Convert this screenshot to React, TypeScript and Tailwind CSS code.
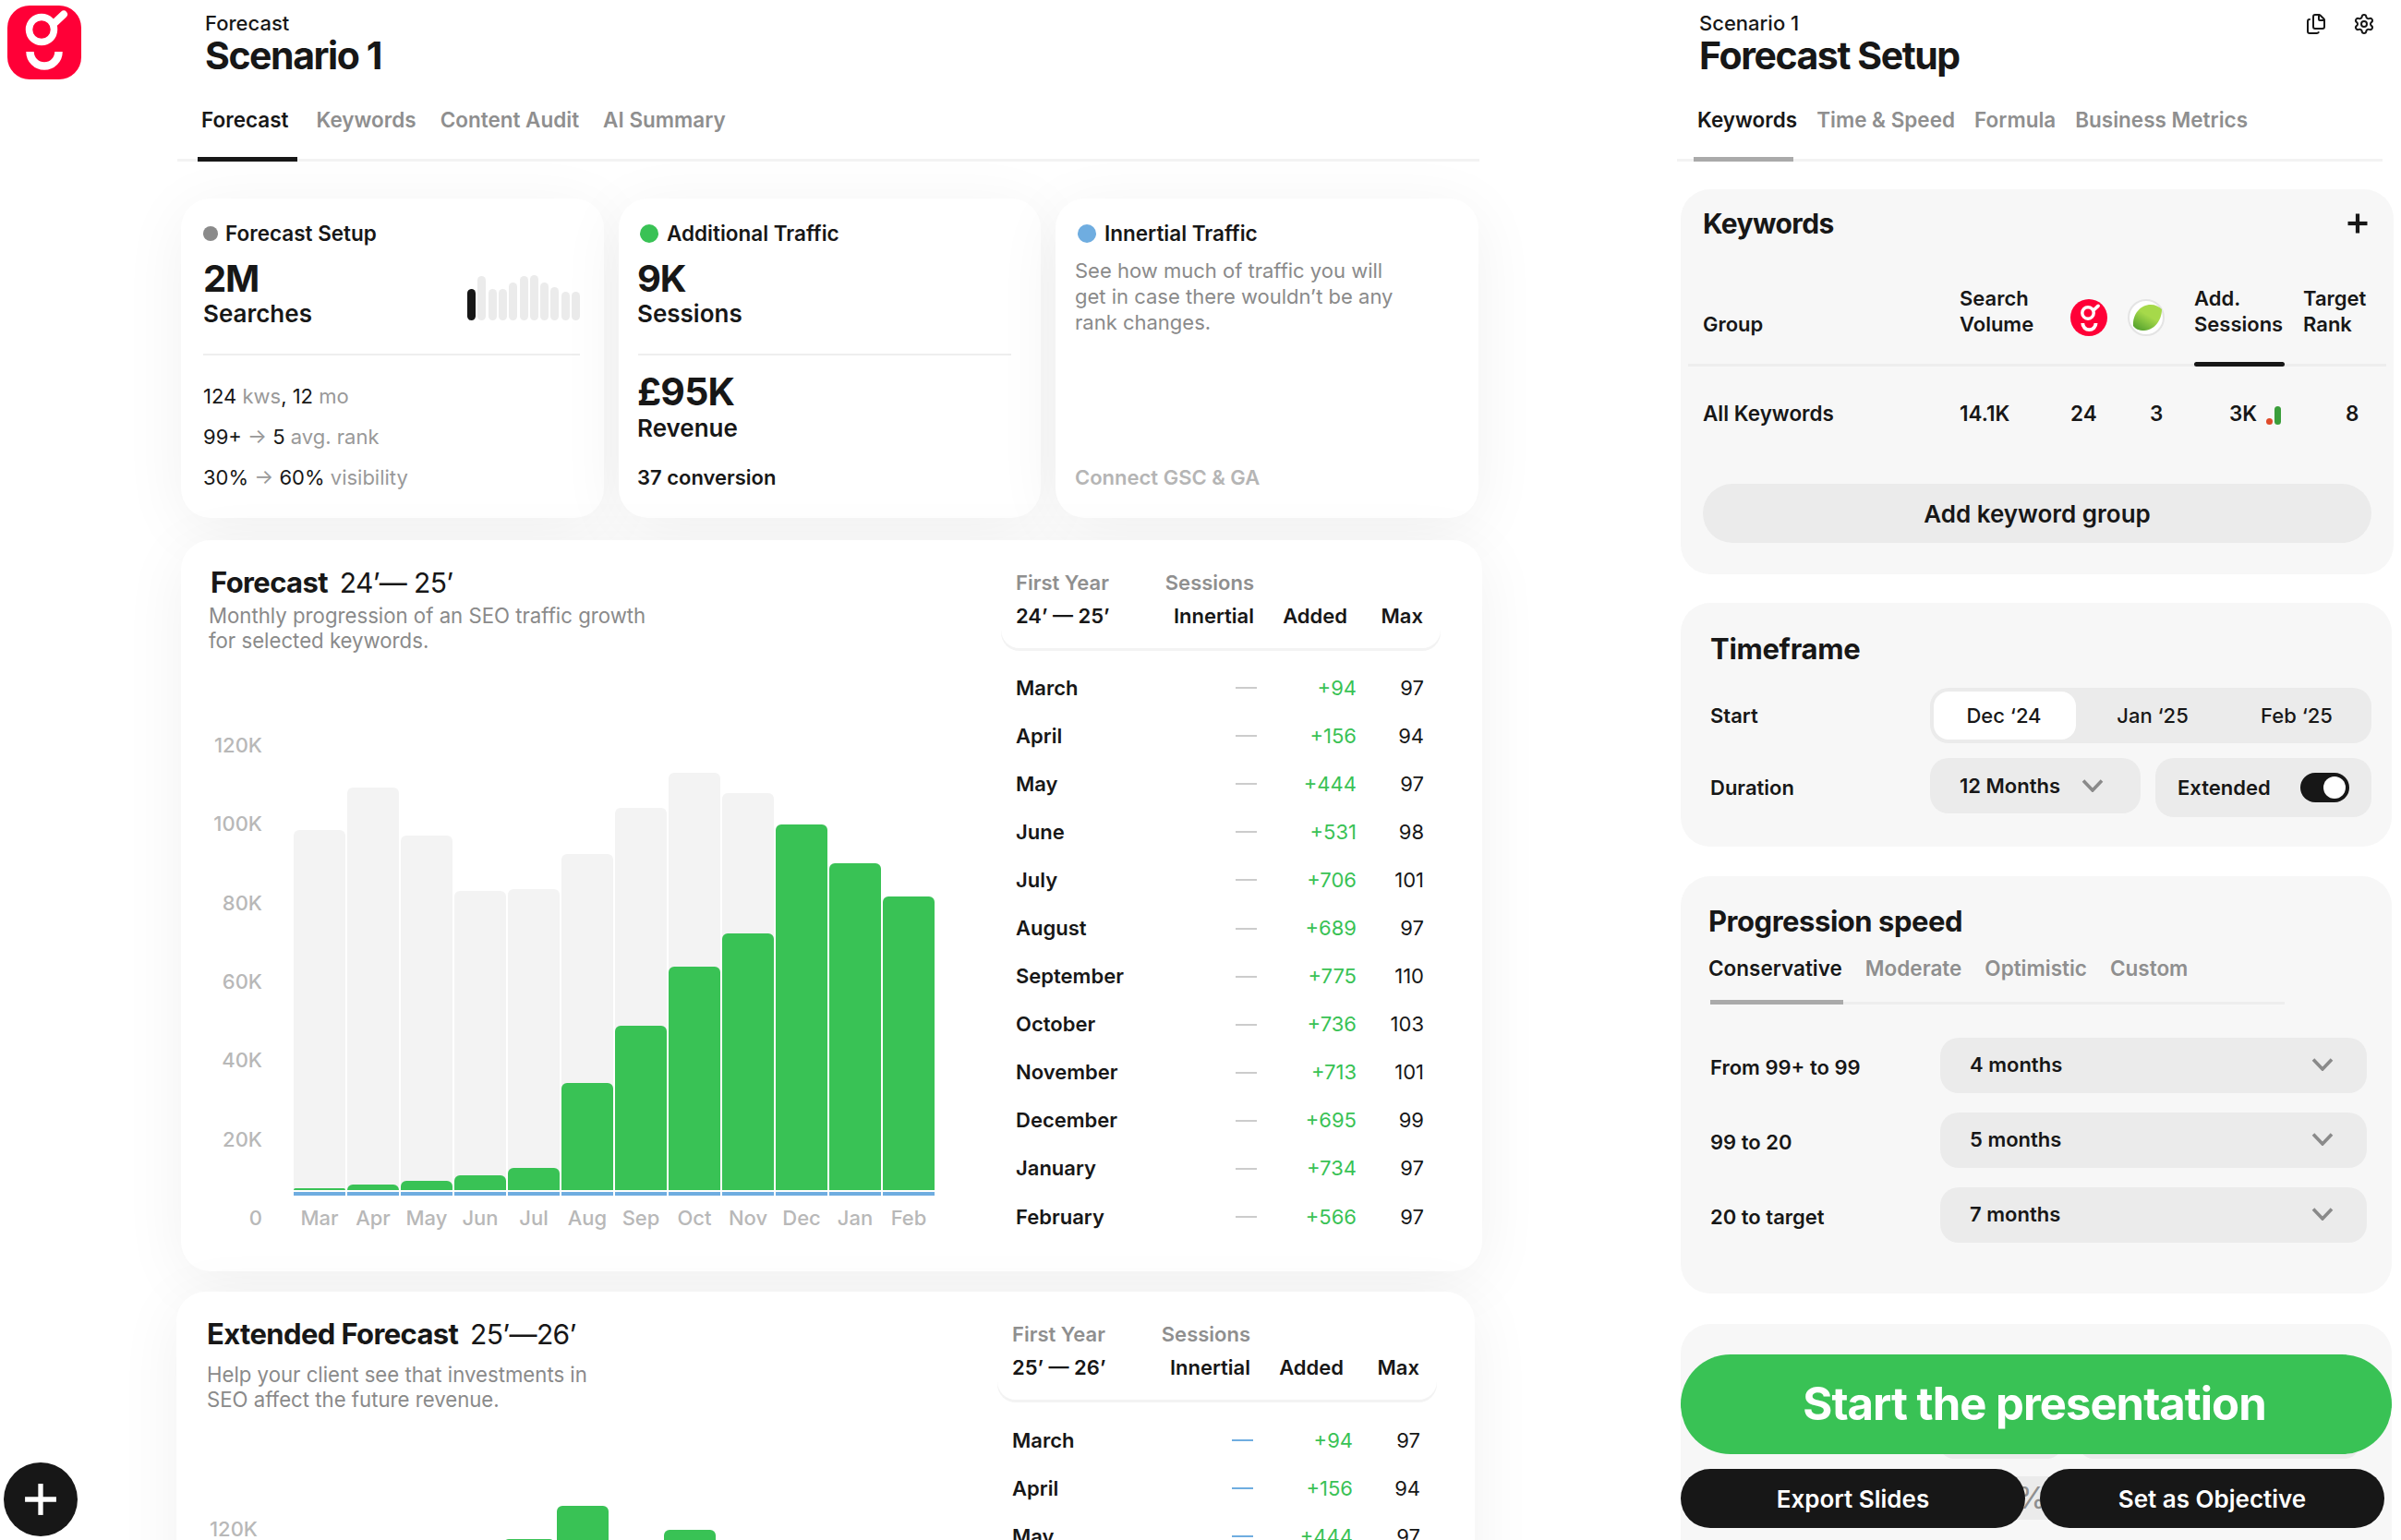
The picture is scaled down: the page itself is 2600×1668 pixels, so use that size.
import React from 'react';
import { Files, Settings, Plus } from 'lucide-react';

const months = ['March', 'April', 'May', 'June', 'July', 'August', 'September', 'October', 'November', 'December', 'January', 'February'];
const added = [94, 156, 444, 531, 706, 689, 775, 736, 713, 695, 734, 566];
const maxes = [97, 94, 97, 98, 101, 97, 110, 103, 101, 99, 97, 97];
const shortMonths = ['Mar', 'Apr', 'May', 'Jun', 'Jul', 'Aug', 'Sep', 'Oct', 'Nov', 'Dec', 'Jan', 'Feb'];
const axis = ['120K', '100K', '80K', '60K', '40K', '20K', '0'];

const grayBars = [390, 436, 384, 324, 326, 364, 414, 452, 430, 396, 354, 318];
const greenBars = [2, 6, 10, 16, 24, 116, 178, 242, 278, 396, 354, 318];
const extGreen = [200, 240, 300, 380, 471, 507, 440, 481, 420, 380, 340, 320];
const miniBars = [34, 48, 34, 34, 41, 48, 49, 41, 36, 31, 31];

const Chevron = () => (
  <svg width="24" height="14" viewBox="0 0 24 14" fill="none" stroke="#8a8a8a" strokeWidth="3.6">
    <path d="M2 1.5 L12 12 L22 1.5" />
  </svg>
);

const LogoMark = () => (
  <g fill="none" stroke="#fff">
    <circle cx="37" cy="26" r="13.5" strokeWidth="7.5" />
    <path d="M52 18 L61 9.5" strokeWidth="8" strokeLinecap="round" />
    <path d="M24.5 50 a15.5 15.5 0 0 0 31 0" strokeWidth="8.5" />
  </g>
);

const Tabs = ({ items, gap, lead, start, activeW, activeColor }: { items: string[]; gap: string; lead: string; start: string; activeW: string; activeColor: string }) => (
  <div>
    <div className={`flex text-[22.5px] leading-7 font-semibold ${gap} ${lead}`}>
      {items.map((t, i) => (
        <span key={t} className={i === 0 ? 'text-[#171717]' : 'text-[#8f8f8f]'}>{t}</span>
      ))}
    </div>
    <div className="flex items-end h-[5px] mt-[26px]">
      <div className={`${start} h-[3px] bg-[#f3f3f3]`} />
      <div className={`${activeW} h-[5px] ${activeColor}`} />
      <div className="flex-1 h-[3px] bg-[#f3f3f3]" />
    </div>
  </div>
);

const StatHead = ({ dot, label }: { dot: string; label: string }) => (
  <div className="flex items-center h-7 text-[22.5px] font-semibold">
    <span className={dot} />
    {label}
  </div>
);

const Chart = ({ gray, green, peek }: { gray: number[]; green: number[]; peek?: boolean }) => (
  <div className="flex gap-[34px]">
    <div className="flex flex-col justify-between items-end w-[56px] h-[538px] text-[22px] leading-[26px] font-medium text-[#b8b8b8]">
      {(peek ? axis.slice(0, 1) : axis).map((a) => <span key={a}>{a}</span>)}
    </div>
    <div>
      <div className="flex items-end gap-[2px] h-[501px]">
        {gray.map((g, i) => (
          <div key={i} className="w-14 flex flex-col shrink-0">
            <div className={`flex flex-col justify-end rounded-t-[6px] ${peek ? '' : 'bg-[#f3f3f3]'}`} style={{ height: g }}>
              <div className="bg-[#39c255] rounded-t-[6px]" style={{ height: green[i] }} />
            </div>
            <div className="h-1 mt-[2px] bg-[#6fade0]" />
          </div>
        ))}
      </div>
      {!peek && (
        <div className="flex gap-[2px] mt-[11px] text-[22px] leading-[26px] font-medium text-[#b8b8b8]">
          {shortMonths.map((m) => <span key={m} className="w-14 text-center">{m}</span>)}
        </div>
      )}
    </div>
  </div>
);

const ForecastTable = ({ years, dash, rowsMt, rows }: { years: string; dash: string; rowsMt: string; rows: number }) => (
  <div className="w-[444px]">
    <div className="-mx-4 px-4 pb-[21px] rounded-b-[20px] shadow-[0_3px_0_#f3f3f3]">
      <div className="flex justify-between w-[258px] h-7 text-[22px] leading-7 font-semibold text-[#8f8f8f]">
        <span>First Year</span>
        <span>Sessions</span>
      </div>
      <div className="grid grid-cols-[258px_101px_82px] mt-2 h-7 text-[22px] leading-7 font-semibold">
        <span className="flex justify-between"><span>{years}</span><span>Innertial</span></span>
        <span className="text-right">Added</span>
        <span className="text-right">Max</span>
      </div>
    </div>
    <div className={rowsMt}>
      {months.slice(0, rows).map((m, i) => (
        <div key={m} className="grid grid-cols-[261px_108px_73px] items-center h-[52.1px] text-[22px]">
          <span className="flex justify-between items-center">
            <span className="font-semibold">{m}</span>
            <span className={`w-[23px] h-[2px] ${dash}`} />
          </span>
          <span className="text-right text-[#39c255]">+{added[i]}</span>
          <span className="text-right">{maxes[i]}</span>
        </div>
      ))}
    </div>
  </div>
);

const SpeedRow = ({ label, value }: { label: string; value: string }) => (
  <div className="flex items-center">
    <span className="w-[249px] pt-1 text-[22px] font-semibold">{label}</span>
    <div className="w-[462px] h-[60px] pl-[32px] pr-[36px] pb-[2px] rounded-[20px] bg-[#ebebeb] flex items-center justify-between text-[22px] font-semibold">
      {value}
      <Chevron />
    </div>
  </div>
);

export default function App() {
  return (
    <div className="relative w-[2600px] h-[1668px] overflow-hidden bg-white flex font-[Inter,sans-serif] text-[#171717]">
      {/* rail */}
      <div className="w-[192px] shrink-0 pl-2 pt-[6px] pb-1 flex flex-col justify-between">
        <svg width="80" height="80" viewBox="0 0 80 80">
          <rect width="80" height="80" rx="24" fill="#ff0037" />
          <LogoMark />
        </svg>
        <div className="w-20 h-20 -ml-1 rounded-full bg-[#171717] flex items-center justify-center text-white">
          <Plus size={58} strokeWidth={2.2} strokeLinecap="butt" />
        </div>
      </div>

      {/* forecast column */}
      <div className="w-[1624px] shrink-0">
        <div className="pt-[11px] pl-[30px]">
          <div className="text-[22px] leading-7 font-medium">Forecast</div>
          <div className="-mt-px text-[41px] leading-[44px] font-bold tracking-[-0.035em]">Scenario 1</div>
        </div>
        <div className="mt-[34px] w-[1410px]">
          <Tabs items={['Forecast', 'Keywords', 'Content Audit', 'AI Summary']} gap="gap-[26px] [&>span:first-child]:mr-[4px]" lead="pl-[26px]" start="w-[22px]" activeW="w-[108px]" activeColor="bg-[#171717]" />
        </div>

        <div className="ml-1 mt-[40px] w-[1406px] grid grid-cols-[458px_457px_458px] gap-4 h-[346px]">
          <div className="pl-6 pr-[26px] pt-6 rounded-[32px] bg-white shadow-[0_12px_70px_rgba(0,0,0,0.06)]">
            <StatHead dot="w-4 h-4 rounded-full bg-[#8a8a8a] mr-2" label="Forecast Setup" />
            <div className="flex justify-between mt-[13px]">
              <div>
                <div className="text-[40px] leading-[44px] font-bold tracking-[-0.03em]">2M</div>
                <div className="text-[26px] leading-[30px] mt-[1px] font-semibold">Searches</div>
              </div>
              <div className="flex items-end gap-[2.3px] mb-2">
                {miniBars.map((h, i) => (
                  <span key={i} className={`w-[9px] rounded-full ${i === 0 ? 'bg-[#171717]' : 'bg-[#ebebeb]'}`} style={{ height: h }} />
                ))}
              </div>
            </div>
            <div className="h-[2px] mt-[28px] bg-[#eeeeee]" />
            <div className="mt-[30px] text-[22px] leading-7">124 <span className="text-[#999999]">kws</span>, 12 <span className="text-[#999999]">mo</span></div>
            <div className="mt-4 text-[22px] leading-7">99+ <span className="text-[#999999]">→</span> 5 <span className="text-[#999999]">avg. rank</span></div>
            <div className="mt-4 text-[22px] leading-7">30% <span className="text-[#999999]">→</span> 60% <span className="text-[#999999]">visibility</span></div>
          </div>

          <div className="pl-5 pr-8 pt-6 rounded-[32px] bg-white shadow-[0_12px_70px_rgba(0,0,0,0.06)]">
            <StatHead dot="w-5 h-5 ml-[3px] rounded-full bg-[#39c255] mr-[9px]" label="Additional Traffic" />
            <div className="mt-[13px] text-[40px] leading-[44px] font-bold tracking-[-0.03em]">9K</div>
            <div className="text-[26px] leading-[30px] mt-[1px] font-semibold">Sessions</div>
            <div className="h-[2px] mt-[28px] ml-[1px] bg-[#eeeeee]" />
            <div className="mt-[17px] text-[41px] leading-[44px] font-bold tracking-[-0.02em]">£95K</div>
            <div className="text-[26px] leading-[30px] mt-[3px] font-semibold">Revenue</div>
            <div className="mt-[24px] text-[22px] leading-7 font-semibold">37 conversion</div>
          </div>

          <div className="pl-[21px] pr-8 pt-6 rounded-[32px] bg-white shadow-[0_12px_70px_rgba(0,0,0,0.06)]">
            <StatHead dot="w-5 h-5 ml-[3px] rounded-full bg-[#6fade0] mr-[9px]" label="Innertial Traffic" />
            <p className="mt-3 text-[22px] leading-7 text-[#8a8a8a]">See how much of traffic you will<br />get in case there wouldn’t be any<br />rank changes.</p>
            <div className="mt-[140px] text-[22px] leading-7 font-semibold text-[#b5b5b5]">Connect GSC &amp; GA</div>
          </div>
        </div>

        <div className="relative ml-1 mt-6 w-[1409px] h-[792px] pt-[32px] flex rounded-[32px] bg-white shadow-[0_12px_70px_rgba(0,0,0,0.06)]">
          <div className="w-[904px] pl-8">
            <div className="text-[31px] leading-7 font-bold tracking-[-0.02em]">Forecast <span className="text-[30px] font-normal ml-[6px]">24’— 25’</span></div>
            <p className="mt-[8px] -ml-[2px] text-[22.2px] leading-[27px] text-[#8a8a8a]">Monthly progression of an SEO traffic growth<br />for selected keywords.</p>
            <div className="mt-[87px]"><Chart gray={grayBars} green={greenBars} /></div>
          </div>
          <ForecastTable years="24’ — 25’" dash="bg-[#cccccc]" rowsMt="mt-[17px]" rows={12} />
        </div>

        <div className="relative -ml-px mt-[22px] w-[1406px] h-[792px] pt-[32px] flex rounded-[32px] bg-white shadow-[0_12px_70px_rgba(0,0,0,0.06)]">
          <div className="w-[905px] pl-[33px]">
            <div className="text-[31px] leading-7 font-bold tracking-[-0.02em]">Extended Forecast <span className="text-[30px] font-normal ml-[6px]">25’—26’</span></div>
            <p className="mt-4 text-[22.2px] leading-[27px] text-[#8a8a8a]">Help your client see that investments in<br />SEO affect the future revenue.</p>
            <div className="mt-[114px] -ml-px"><Chart gray={extGreen} green={extGreen} peek /></div>
          </div>
          <ForecastTable years="25’ — 26’" dash="bg-[#6fade0]" rowsMt="mt-[18px]" rows={3} />
        </div>
      </div>

      {/* setup column */}
      <div className="flex-1 min-w-0">
        <div className="pt-[11px] pl-[24px] pr-[28px] flex justify-between">
          <div>
            <div className="text-[22px] leading-7 font-medium">Scenario 1</div>
            <div className="-mt-px text-[41px] leading-[44px] font-bold tracking-[-0.035em]">Forecast Setup</div>
          </div>
          <div className="flex gap-[28px] pt-[3px]">
            <Files size={24} strokeWidth={2} />
            <Settings size={24} strokeWidth={2} />
          </div>
        </div>
        <div className="mt-[34px] w-[764px]">
          <Tabs items={['Keywords', 'Time & Speed', 'Formula', 'Business Metrics']} gap="gap-[21px]" lead="pl-[22px]" start="w-[18px]" activeW="w-[108px]" activeColor="bg-[#aaaaaa]" />
        </div>

        {/* keywords */}
        <div className="ml-1 mt-[30px] w-[772px] h-[417px] pt-[23px] rounded-[32px] bg-[#f7f7f7]">
          <div className="flex items-center justify-between pl-[24px] pr-[21px] h-7">
            <span className="text-[30px] font-bold tracking-[-0.02em]">Keywords</span>
            <Plus size={36} strokeWidth={2.8} strokeLinecap="butt" />
          </div>
          <div className="mt-[53px] pl-[24px] grid grid-cols-[278px_120px_62px_72px_118px_1fr] items-end text-[22px] leading-7 font-semibold h-[56px]">
            <span>Group</span>
            <span>Search<br />Volume</span>
            <svg className="mb-[1px]" width="40" height="40" viewBox="0 0 80 80">
              <circle cx="40" cy="40" r="40" fill="#ff0037" />
              <g transform="translate(4 6) scale(0.92)"><LogoMark /></g>
            </svg>
            <svg className="mb-[1px]" width="40" height="40" viewBox="0 0 40 40">
              <defs>
                <linearGradient id="lime" x1="0.1" y1="1" x2="0.5" y2="0.4">
                  <stop offset="0" stopColor="#4f9e2c" />
                  <stop offset="1" stopColor="#a6d94a" />
                </linearGradient>
              </defs>
              <circle cx="20" cy="20" r="19" fill="#ffffff" stroke="#e4e4e4" strokeWidth="2" />
              <path d="M6 29 C5 16 14 6 25 6 C30 6 34 8 37 11 C37 22 30 33 18 34 C12 34 8 32 6 29 Z" fill="url(#lime)" />
            </svg>
            <span>Add.<br />Sessions</span>
            <span>Target<br />Rank</span>
          </div>
          <div className="relative mt-[29px] mx-2 h-[3px] bg-[#eeeeee]">
            <div className="absolute left-[548px] -top-[2px] w-[98px] h-[5px] rounded-full bg-[#171717]" />
          </div>
          <div className="mt-[37px] pl-[24px] grid grid-cols-[278px_120px_62px_72px_118px_1fr] items-center h-7 text-[22.5px] leading-7 font-semibold">
            <span>All Keywords</span>
            <span>14.1K</span>
            <span>24</span>
            <span className="pl-6">3</span>
            <span className="pl-[38px] flex items-center">3K
              <span className="flex items-end gap-[2px] ml-[10px] h-5 mt-1">
                <span className="w-[7px] h-[7px] rounded-full bg-[#e04a2a]" />
                <span className="w-[7px] h-5 rounded-full bg-[#3a9e3a]" />
              </span>
            </span>
            <span className="pl-[46px]">8</span>
          </div>
          <div className="mt-[62px] mx-6 h-[64px] w-[724px] rounded-full bg-[#ebebeb] flex items-center justify-center text-[26px] font-semibold">Add keyword group</div>
        </div>

        {/* timeframe */}
        <div className="ml-1 mt-[31px] w-[770px] h-[264px] pt-[33px] pl-[32px] rounded-[32px] bg-[#f7f7f7]">
          <div className="text-[31px] leading-[34px] font-bold tracking-[-0.01em]">Timeframe</div>
          <div className="mt-[25px] flex items-center">
            <span className="w-[238px] text-[22px] font-semibold">Start</span>
            <div className="w-[478px] h-[60px] p-1 rounded-[20px] bg-[#ebebeb] flex items-center text-[22px] font-medium">
              <span className="w-[154px] h-[52px] pr-[2px] rounded-[16px] bg-white flex items-center justify-center">Dec ‘24</span>
              <span className="w-[160px] text-center pl-[6px]">Jan ‘25</span>
              <span className="w-[156px] text-center pl-[2px]">Feb ‘25</span>
            </div>
          </div>
          <div className="mt-4 flex items-start">
            <span className="w-[238px] pt-[18px] text-[22px] leading-7 font-semibold">Duration</span>
            <div className="w-[228px] h-[60px] pl-[32px] rounded-[20px] bg-[#ebebeb] flex items-center gap-[23px] text-[22px] font-semibold">12 Months <Chevron /></div>
            <div className="ml-4 w-[234px] h-[64px] pl-[24px] pr-[24px] rounded-[20px] bg-[#ebebeb] flex items-center justify-between text-[22px] font-semibold">
              Extended
              <span className="w-[53px] h-8 rounded-full bg-[#171717] flex items-center justify-end pr-1">
                <span className="w-6 h-6 rounded-full bg-white" />
              </span>
            </div>
          </div>
        </div>

        {/* progression */}
        <div className="ml-1 mt-[32px] w-[770px] h-[452px] pt-[32px] pl-[32px] rounded-[32px] bg-[#f7f7f7]">
          <div className="-ml-[2px] text-[31px] leading-[34px] font-bold tracking-[-0.015em]">Progression speed</div>
          <div className="mt-[20px] -ml-[2px] flex gap-[25px] text-[22.5px] leading-7 font-semibold text-[#8f8f8f]">
            <span className="text-[#171717]">Conservative</span>
            <span>Moderate</span>
            <span>Optimistic</span>
            <span>Custom</span>
          </div>
          <div className="flex items-end h-[5px] mt-[20px] w-[622px]">
            <div className="w-[144px] h-[5px] bg-[#aaaaaa]" />
            <div className="flex-1 h-[3px] bg-[#eeeeee]" />
          </div>
          <div className="mt-[36px] flex flex-col gap-[21px]">
            <SpeedRow label="From 99+ to 99" value="4 months" />
            <SpeedRow label="99 to 20" value="5 months" />
            <SpeedRow label="20 to target" value="7 months" />
          </div>
        </div>

        {/* next card, mostly covered by the action bar */}
        <div className="ml-1 mt-[33px] w-[770px] h-[300px] pt-[114px] pl-[280px] rounded-[32px] bg-[#f7f7f7]">
          <div className="flex gap-[18px]">
            <div className="w-[133px] h-8 rounded-[16px] bg-[#ebebeb]" />
            <div className="w-[304px] h-8 rounded-[16px] bg-[#ebebeb]" />
          </div>
          <div className="mt-[19px] w-[200px] h-[47px] rounded-[16px] bg-[#ebebeb] flex items-center justify-center text-[32px] font-medium text-[#8f8f8f]">%</div>
        </div>
      </div>

      {/* action bar */}
      <div className="absolute left-[1820px] top-[1467px] w-[770px]">
        <div className="h-[108px] pr-1 rounded-[54px] bg-[#39c255] flex items-center justify-center text-[49px] font-bold tracking-[-0.02em] text-white">Start the presentation</div>
        <div className="mt-4 flex gap-4">
          <div className="w-[373px] h-16 rounded-full bg-[#171717] flex items-center justify-center text-[26px] font-semibold text-white">Export Slides</div>
          <div className="w-[373px] h-16 rounded-full bg-[#171717] flex items-center justify-center text-[26px] font-semibold text-white">Set as Objective</div>
        </div>
      </div>
    </div>
  );
}
